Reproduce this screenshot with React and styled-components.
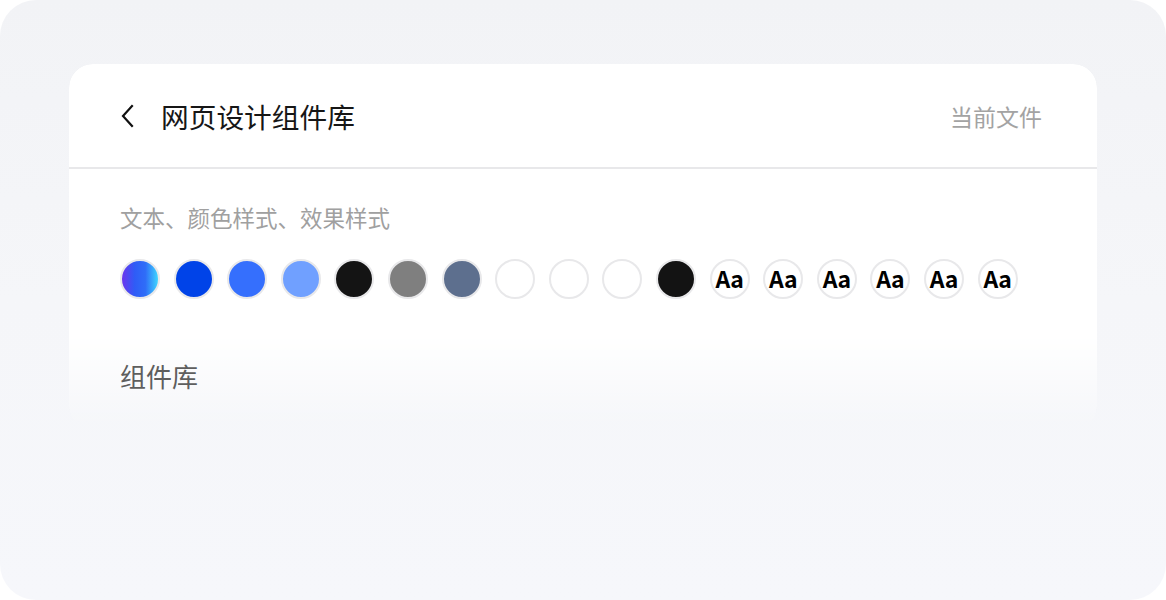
import React from 'react';
import styled, { createGlobalStyle } from 'styled-components';

const GlobalStyle = createGlobalStyle`
  html, body {
    margin: 0;
    padding: 0;
    background: #ffffff;
  }
  body {
    font-family: "Noto Sans", "Noto Sans CJK SC", sans-serif;
  }
`;

const Frame = styled.div`
  width: 1166px;
  height: 600px;
  box-sizing: border-box;
  border-radius: 36px;
  background: linear-gradient(180deg, #f2f3f6 0%, #f5f6f9 50%, #f6f7fb 100%);
  padding: 64px 69px 0;
  overflow: hidden;
`;

const Card = styled.div`
  position: relative;
  height: 366px;
  display: flex;
  flex-direction: column;

  &::before {
    content: '';
    position: absolute;
    inset: 0;
    background: #ffffff;
    border-radius: 24px;
    box-shadow: 0 6px 40px rgba(30, 40, 80, 0.05);
    -webkit-mask-image: linear-gradient(180deg, #000 0, #000 266px, rgba(0, 0, 0, 0) 366px);
    mask-image: linear-gradient(180deg, #000 0, #000 266px, rgba(0, 0, 0, 0) 366px);
  }

  & > * {
    position: relative;
  }
`;

const Header = styled.div`
  height: 103px;
  border-bottom: 2px solid #e8e8ea;
  display: flex;
  align-items: center;
  padding: 0 55px 0 51px;
`;

const Back = styled.button`
  border: 0;
  background: none;
  padding: 0;
  width: 14px;
  height: 24px;
  display: flex;
  align-items: center;
  justify-content: center;
  margin-right: 27px;
  cursor: pointer;
`;

const Title = styled.h1`
  margin: 0;
  font-size: 27.7px;
  font-weight: 400;
  color: #161616;
  flex: 1;
`;

const Current = styled.span`
  font-size: 23px;
  color: #a3a3a3;
`;

const Body = styled.div`
  padding: 35px 51px 0;
  display: flex;
  flex-direction: column;
`;

const Label = styled.div`
  font-size: 22.5px;
  line-height: 30px;
  color: #a0a0a0;
`;

const Swatches = styled.div`
  display: flex;
  gap: 13.6px;
  margin-top: 25px;
`;

const Swatch = styled.div`
  width: 40px;
  height: 40px;
  box-sizing: border-box;
  border-radius: 50%;
  border: 2px solid #e8e8ea;
  background: ${p => p.$fill};
  display: flex;
  align-items: center;
  justify-content: center;
  font-family: "Noto Sans CJK SC", "Noto Sans", sans-serif;
  font-weight: 700;
  font-size: 23px;
  line-height: 1;
  color: #000;
  letter-spacing: -0.3px;
  padding-bottom: 1px;
`;

const Section = styled.div`
  margin-top: 60px;
  font-size: 26px;
  line-height: 36px;
  color: #5e5e5e;
`;

const fills = [
  'linear-gradient(90deg, #6b35ee 0%, #2f5cf6 35%, #2f6df8 65%, #3fd6ff 100%)',
  '#0043e8',
  '#356ffd',
  '#70a0ff',
  '#141414',
  '#7f7f7f',
  '#5d6f8e',
  '#ffffff',
  '#ffffff',
  '#ffffff',
  '#131313',
];

export default function App() {
  return (
    <>
      <GlobalStyle />
      <Frame>
        <Card>
          <Header>
            <Back aria-label="返回">
              <svg width="14" height="24" viewBox="0 0 14 24" fill="none">
                <path d="M12 2 L3 12 L12 22" stroke="#111" strokeWidth="2.2" strokeLinecap="square" />
              </svg>
            </Back>
            <Title>网页设计组件库</Title>
            <Current>当前文件</Current>
          </Header>
          <Body>
            <Label>文本、颜色样式、效果样式</Label>
            <Swatches>
              {fills.map((f, i) => (
                <Swatch key={i} $fill={f} />
              ))}
              {[0, 1, 2, 3, 4, 5].map(i => (
                <Swatch key={'t' + i} $fill="#fff">Aa</Swatch>
              ))}
            </Swatches>
            <Section>组件库</Section>
          </Body>
        </Card>
      </Frame>
    </>
  );
}
